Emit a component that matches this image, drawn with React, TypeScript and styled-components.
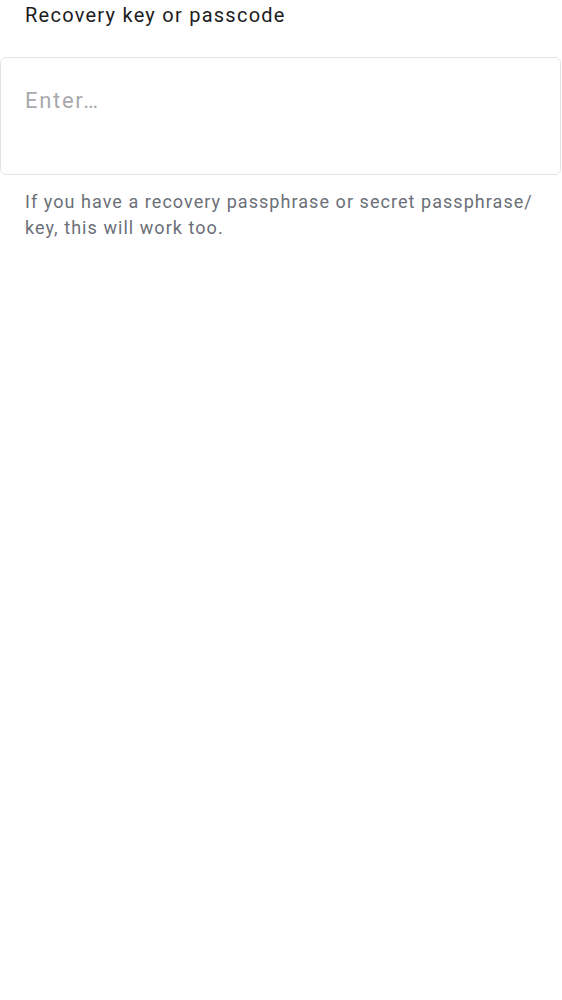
import React from 'react';
import styled, { createGlobalStyle } from 'styled-components';

const GlobalStyle = createGlobalStyle`
  body {
    margin: 0;
    background: #ffffff;
    font-family: Roboto, "Noto Sans", sans-serif;
  }
`;

const Field = styled.div`
  display: flex;
  flex-direction: column;
  width: 562px;
`;

const Label = styled.label`
  padding: 0 25px;
  font-size: 20px;
  line-height: 30px;
  color: #1c1c1e;
  letter-spacing: 1.25px;
`;

const Input = styled.textarea`
  box-sizing: border-box;
  margin-top: 27px;
  width: 561px;
  height: 118px;
  padding: 26px 24px;
  border: 1.5px solid #e4e4e4;
  border-radius: 6px;
  resize: none;
  outline: none;
  font-family: Roboto, "Noto Sans", sans-serif;
  font-size: 22px;
  line-height: 33px;
  letter-spacing: 1.7px;
  color: #1c1c1e;

  &::placeholder {
    color: #a9a9ad;
  }
`;

const Hint = styled.p`
  margin: 14px 0 0;
  padding: 0 25px;
  font-size: 18px;
  line-height: 26px;
  letter-spacing: 1.05px;
  color: #6b6f78;
`;

const App: React.FC = () => {
  return (
    <>
      <GlobalStyle />
      <Field>
        <Label htmlFor="recovery">Recovery key or passcode</Label>
        <Input id="recovery" placeholder="Enter…" />
        <Hint>
          If you have a recovery passphrase or secret passphrase/ key, this will work too.
        </Hint>
      </Field>
    </>
  );
};

export default App;
